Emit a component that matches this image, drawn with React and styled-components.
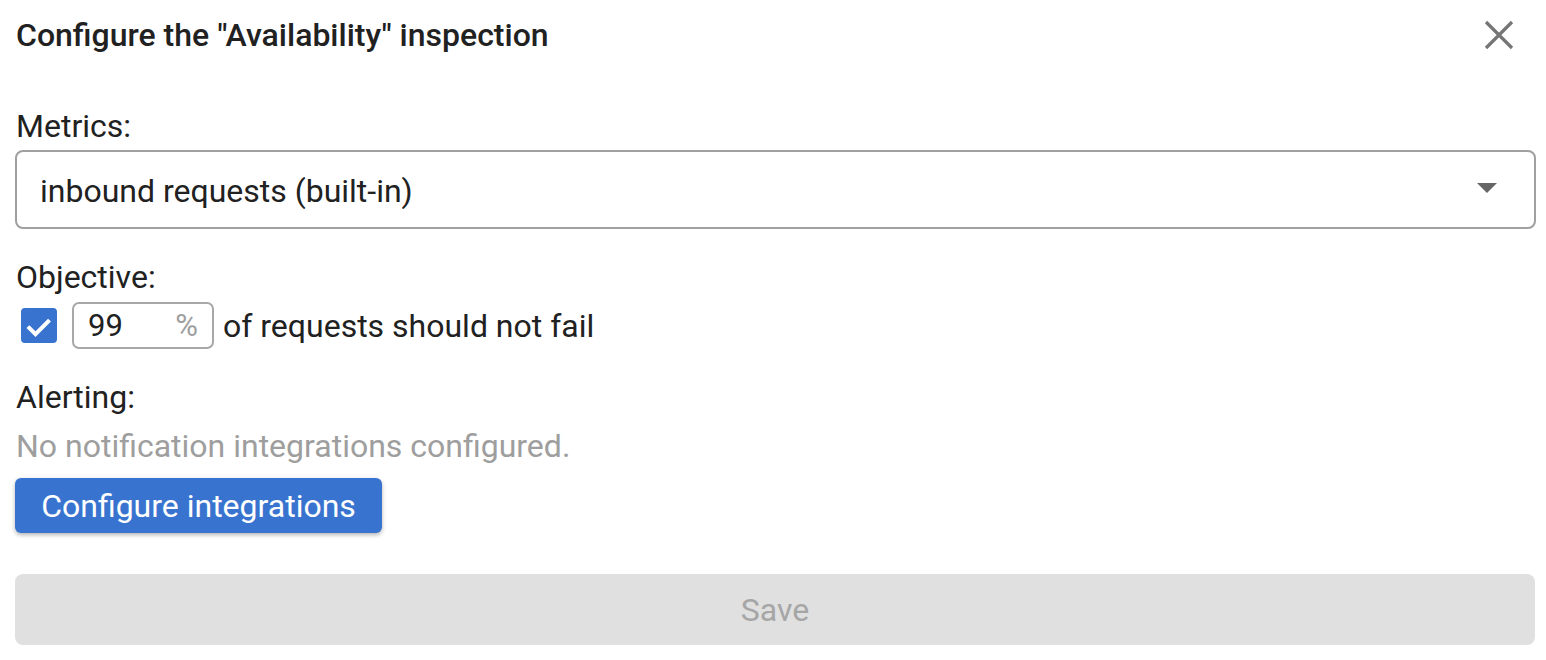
import React from "react";
import styled, { createGlobalStyle } from "styled-components";

const Global = createGlobalStyle`
  html, body { margin: 0; padding: 0; background: #fff; }
  body { font-family: Roboto, "Noto Sans", Arial, sans-serif; color: #212121; }
  * { box-sizing: border-box; }
`;

const Dialog = styled.div`
  width: 1546px;
  height: 660px;
  padding: 14px 11px 0 15px;
  display: flex;
  flex-direction: column;
`;

const Header = styled.div`
  display: flex;
  align-items: center;
  justify-content: space-between;
  height: 42px;
`;

const Title = styled.h1`
  margin: 0 0 0 1px;
  font-size: 32px;
  line-height: 42px;
  font-weight: 500;
  color: #212121;
`;

const CloseButton = styled.button`
  border: 0;
  background: none;
  padding: 0;
  width: 40px;
  height: 40px;
  display: flex;
  align-items: center;
  justify-content: center;
  margin-right: 16px;
  cursor: pointer;
`;

const Label = styled.div`
  font-size: 32px;
  line-height: 42px;
  color: #212121;
  margin-top: ${(p) => p.$mt || 0}px;
  padding-left: 1px;
`;

const Select = styled.div`
  margin-top: 3px;
  width: 1521px;
  height: 79px;
  border: 2px solid #a0a0a0;
  border-radius: 8px;
  display: flex;
  align-items: center;
  justify-content: space-between;
  padding: 3px 37px 0 23px;
  font-size: 32px;
  color: #212121;
`;

const Arrow = styled.svg`
  margin-top: -6px;
`;

const Row = styled.div`
  margin-top: 4px;
  display: flex;
  align-items: center;
  height: 47px;
`;

const Checkbox = styled.div`
  width: 36px;
  height: 35px;
  margin-left: 6px;
  border-radius: 4px;
  background: #3874cf;
  display: flex;
  align-items: center;
  justify-content: center;
  overflow: hidden;
`;

const NumberBox = styled.div`
  margin-left: 15px;
  width: 142px;
  height: 47px;
  border: 2px solid #a8a8a8;
  border-radius: 7px;
  display: flex;
  align-items: center;
  justify-content: space-between;
  padding: 0 14px 0 14px;
  font-size: 31px;
`;

const Value = styled.span`
  color: #212121;
`;

const Unit = styled.span`
  color: #9e9e9e;
`;

const RowText = styled.span`
  margin-left: 9px;
  font-size: 32px;
  color: #212121;
`;

const Muted = styled.div`
  font-size: 32px;
  line-height: 42px;
  color: #9e9e9e;
  margin-top: 7px;
  padding-left: 1px;
`;

const PrimaryButton = styled.button`
  margin-top: 11px;
  align-self: flex-start;
  width: 367px;
  height: 55px;
  border: 0;
  border-radius: 6px;
  background: #3874cf;
  color: #fff;
  font-family: inherit;
  font-size: 32px;
  box-shadow: 0 2px 4px rgba(0, 0, 0, 0.3);
  cursor: pointer;
`;

const SaveButton = styled.button`
  margin-top: 41px;
  width: 1520px;
  height: 71px;
  border: 0;
  border-radius: 8px;
  background: #e0e0e0;
  color: #a6a6a6;
  font-family: inherit;
  font-size: 32px;
`;

export default function App() {
  return (
    <>
      <Global />
      <Dialog>
        <Header>
          <Title>Configure the "Availability" inspection</Title>
          <CloseButton aria-label="close">
            <svg width="30" height="30" viewBox="0 0 30 30">
              <path d="M2 2 L28 28 M28 2 L2 28" stroke="#757575" strokeWidth="3.2" />
            </svg>
          </CloseButton>
        </Header>
        <Label $mt={49}>Metrics:</Label>
        <Select>
          <span>inbound requests (built-in)</span>
          <Arrow width="20" height="10" viewBox="0 0 20 10">
            <path d="M0 0 L20 0 L10 10 Z" fill="#666" />
          </Arrow>
        </Select>
        <Label $mt={27}>Objective:</Label>
        <Row>
          <Checkbox>
            <svg width="28" height="28" viewBox="0 0 24 24">
              <path d="M2.5 12.5 L9 19 L21 7" stroke="#fff" strokeWidth="3.5" fill="none" />
            </svg>
          </Checkbox>
          <NumberBox>
            <Value>99</Value>
            <Unit>%</Unit>
          </NumberBox>
          <RowText>of requests should not fail</RowText>
        </Row>
        <Label $mt={27}>Alerting:</Label>
        <Muted>No notification integrations configured.</Muted>
        <PrimaryButton>Configure integrations</PrimaryButton>
        <SaveButton disabled>Save</SaveButton>
      </Dialog>
    </>
  );
}
